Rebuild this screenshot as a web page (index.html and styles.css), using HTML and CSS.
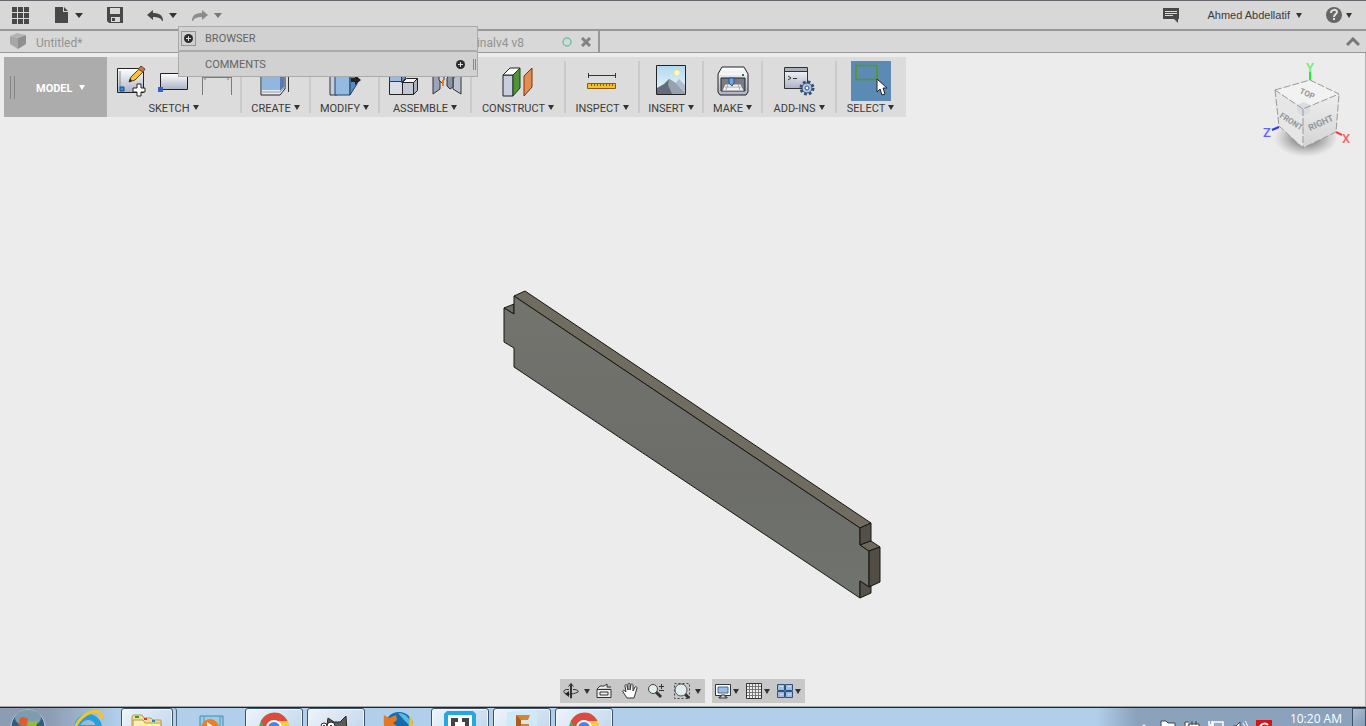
FILE: index.html
```html
<!DOCTYPE html>
<html lang="en">
<head>
  <meta charset="UTF-8">
  <meta name="viewport" content="width=device-width, initial-scale=1.0">
  <title>Untitled*</title>
  <link rel="stylesheet" href="styles.css">
</head>
<body>
  <header class="topbar">
    <div class="tools">
      <button class="tool" aria-label="Data panel">
        <svg width="17" height="18" fill="#484848"><path d="M0 1h5v5H0zM6 1h5v5H6zM12 1h5v5h-5zM0 7h5v5H0zM6 7h5v5H6zM12 7h5v5h-5zM0 13h5v5H0zM6 13h5v5H6zM12 13h5v5h-5z"/></svg>
      </button>
      <button class="tool" aria-label="File">
        <svg width="16" height="16" fill="#484848"><path d="M2 0h8v5h5v11H2z"/><path d="M11 0l4 4h-4z"/></svg>
        <span class="caret"></span>
      </button>
      <button class="tool" aria-label="Save">
        <svg width="16" height="16"><path d="M0 0h16v16H2l-2-2z" fill="#484848"/><path d="M3 1h10v6H3z" fill="#d8d8d8"/><path d="M4 10h9v5H4z" fill="#d8d8d8"/><path d="M5 11h3v3H5z" fill="#484848"/></svg>
      </button>
      <div class="history">
        <button class="tool" aria-label="Undo">
          <svg width="16" height="14"><path d="M6 2v3c6 0 10 2 10 8h-1c-1-3-4-4-9-4v3L0 7z" fill="#484848"/></svg>
          <span class="caret"></span>
        </button>
        <button class="tool muted" aria-label="Redo">
          <svg width="16" height="14"><path d="M10 2v3C4 5 0 7 0 13h1c1-3 4-4 9-4v3l6-5z" fill="#8c8c8c"/></svg>
          <span class="caret"></span>
        </button>
      </div>
    </div>
    <div class="account">
      <button class="tool" aria-label="Comments">
        <svg width="16" height="16"><path d="M0 1h16v11h-1v4l-4-4H0z" fill="#484848"/><path d="M2 4.500h12M2 6.500h12M2 8.500h8" stroke="#d8d8d8"/></svg>
      </button>
      <button class="tool user">Ahmed Abdellatif <span class="caret"></span></button>
      <button class="tool help" aria-label="Help">
        <svg width="16" height="16"><circle cx="8" cy="8" r="8" fill="#666"/><path d="M5 6c0-4 6-4 6-1 0 2-3 2-3 5M8 11v2" fill="none" stroke="#e2e2e2" stroke-width="2"/></svg>
        <span class="caret"></span>
      </button>
    </div>
  </header>

  <nav class="tabs">
    <a class="tab" href="#untitled">
      <svg width="18" height="17"><path d="M1 3l7-3 9 2-8 3z" fill="#b4b4b4"/><path d="M1 3l8 2v11l-8-5z" fill="#a6a6a6"/><path d="M9 5l8-3v9l-8 5z" fill="#8f8f8f"/></svg>
      <span class="tab-title">Untitled*</span>
    </a>
    <a class="tab tab-second" href="#final">
      <span class="tab-title tab-name">Finalv4 v8</span>
      <svg width="10" height="10"><circle cx="5" cy="5" r="4" fill="none" stroke="#6cc3ab" stroke-width="1.5"/></svg>
      <svg width="10" height="10"><path d="M1 1l8 8M9 1l-8 8" stroke="#828282" stroke-width="3"/></svg>
    </a>
    <button class="collapse" aria-label="Collapse toolbar">
      <svg width="14" height="10"><path d="M1 8l6-6 6 6" fill="none" stroke="#777" stroke-width="3"/></svg>
    </button>
  </nav>

  <aside class="panels">
    <div class="panel">
      <button class="panel-add boxed" aria-label="Open browser">
        <svg width="9" height="9"><circle cx="4.500" cy="4.500" r="4.500" fill="#2c2c2c"/><path d="M2 4.500h5M4.500 2v5" stroke="#ddd"/></svg>
      </button>
      <span>BROWSER</span>
    </div>
    <div class="panel">
      <span class="panel-name">COMMENTS</span>
      <button class="panel-add" aria-label="Open comments">
        <svg width="9" height="9"><circle cx="4.500" cy="4.500" r="4.500" fill="#2c2c2c"/><path d="M2 4.500h5M4.500 2v5" stroke="#ddd"/></svg>
      </button>
      <span class="panel-grip"></span>
    </div>
  </aside>

  <main class="viewport">
    <div class="ribbon">
      <div class="workspace">
        <span class="grip"></span>
        <button class="workspace-name">MODEL <span class="caret"></span></button>
      </div>

      <div class="group sketch">
        <div class="icons">
          <svg width="32" height="32">
            <defs><linearGradient id="steel" x2="0" y2="1"><stop offset="0" stop-color="#fff"/><stop offset="1" stop-color="#aab2c6"/></linearGradient></defs>
            <path d="M2.500 3.500h26v24h-26z" fill="url(#steel)" stroke="#222"/>
            <path d="M5 6v17" stroke="#888"/><path d="M5 22h4v4H5z" fill="#3c8ae6" stroke="#124a95"/>
            <path d="M14 17l2-5 9-9 4 3-9 9z" fill="#f6c52f" stroke="#5d4313"/><path d="M23 4l3-3 4 3-2 3z" fill="#bd7954" stroke="#74442e"/><path d="M14 17l1-4 2 3z" fill="#222"/>
            <path d="M22 19h4v4h4v4h-4v4h-4v-4h-4v-4h4z" fill="#fff" stroke="#222"/>
          </svg>
          <svg width="32" height="32">
            <path d="M2.500 8.500h27v16h-27z" fill="url(#steel)" stroke="#222"/><path d="M0 22h5v5H0z" fill="#3264c8"/>
          </svg>
          <svg width="32" height="32" fill="none" stroke="#7b7b7b"><path d="M1.500 30V11.500h29V30M1 12.500h29M4 11v4M27 11v4"/></svg>
        </div>
        <button class="label">SKETCH <span class="caret"></span></button>
      </div>

      <div class="group create">
        <div class="icons">
          <svg width="32" height="32">
            <path d="M1 6h20l4-3v21l-5 6H1z" fill="#e9ebf0" stroke="#222"/><path d="M2 5h18v20H2z" fill="#91b6df"/><path d="M20 5l4-3v20l-4 4z" fill="#587bb4"/><path d="M1 27h19l5-5" fill="none" stroke="#99a"/><path d="M28.500 10v17" stroke="#333"/>
          </svg>
        </div>
        <button class="label">CREATE <span class="caret"></span></button>
      </div>

      <div class="group modify">
        <div class="icons">
          <svg width="32" height="32">
            <path d="M1 5h7v25H1z" fill="#c6ccda" stroke="#333"/><path d="M6 5h15v25H6z" fill="#94b9e2" stroke="#23426e"/><path d="M21 5l7 2v12l-7 11z" fill="#5e88bd" stroke="#23426e"/><path d="M22 13h4v-3l6 5-6 5v-3h-4z" fill="#222"/>
          </svg>
        </div>
        <button class="label">MODIFY <span class="caret"></span></button>
      </div>

      <div class="group assemble">
        <div class="icons">
          <svg width="32" height="32">
            <path d="M1.500 16.500h13v13h-13z" fill="#dadde4" stroke="#222"/><path d="M14.500 17.500h11v12h-11z" fill="#c3c8d5" stroke="#222"/><path d="M14.500 17.500l4-4h11l-4 4z" fill="#f3f4f7" stroke="#222"/><path d="M25.500 17.500l4-4v12l-4 4z" fill="#a9b0bf" stroke="#222"/><path d="M1.500 8.500h12v8h-12z" fill="#96bce6" stroke="#173d78"/><path d="M13.500 8.500l4-4v9l-4 4z" fill="#6488bb" stroke="#173d78"/>
          </svg>
          <svg width="32" height="32">
            <path d="M2 8l7 5v11l-7 5z" fill="#9ca5b6" stroke="#333"/><path d="M30 8l-8 5v11l8 5z" fill="#b9c1ce" stroke="#333"/><path d="M8 8h5v7l-2 3-3-3z" fill="#d4d8e0" stroke="#333"/><path d="M16 13l3-3 3 3v9l-3 2-3-3z" fill="#8b94a5" stroke="#333"/><path d="M12 15v6M19 8v5M17 11.500h5" stroke="#f37a16" stroke-width="2"/>
          </svg>
        </div>
        <button class="label">ASSEMBLE <span class="caret"></span></button>
      </div>

      <div class="group construct">
        <div class="icons">
          <svg width="32" height="32">
            <path d="M1 10h10v21H1z" fill="#c8cedb" stroke="#222"/><path d="M1 10l7-7h10l-7 7z" fill="#fff" stroke="#222"/><path d="M11 10l7-7v20l-7 8z" fill="#50933b" stroke="#173e12"/><path d="M22 11l8-8v19l-8 9z" fill="#e58c52" stroke="#7b3212"/>
          </svg>
        </div>
        <button class="label">CONSTRUCT <span class="caret"></span></button>
      </div>

      <div class="group inspect">
        <div class="icons">
          <svg width="32" height="32">
            <path d="M2 10.500h28M2.500 8v5M29.500 8v5" stroke="#333"/><path d="M1.500 18.500h28v5h-28z" fill="#efc12d" stroke="#90580b"/><path d="M5.500 19v2M8.500 19v2M11.500 19v2M14.500 19v2M17.500 19v2M20.500 19v2M23.500 19v2M26.500 19v2" stroke="#90580b"/>
          </svg>
        </div>
        <button class="label">INSPECT <span class="caret"></span></button>
      </div>

      <div class="group insert">
        <div class="icons">
          <svg width="32" height="32">
            <defs><linearGradient id="sky" x2="0" y2="1"><stop offset="0" stop-color="#afd9ef"/><stop offset="1" stop-color="#edf8fb"/></linearGradient></defs>
            <path d="M1.500 .5h29v29h-29z" fill="url(#sky)"/><circle cx="22" cy="8" r="3" fill="#fffbd1" stroke="#f4df86"/><path d="M17 22l7-8 6 6v9H17z" fill="#aebccb"/><path d="M2 23l7-4 5-5 5 3 11 12H2z" fill="#626c7c"/><path d="M14 14l5 3 11 12H17l-4-9z" fill="#98a2ad"/><path d="M1.500 .5h29v29h-29z" fill="none" stroke="#222"/>
          </svg>
        </div>
        <button class="label">INSERT <span class="caret"></span></button>
      </div>

      <div class="group make">
        <div class="icons">
          <svg width="32" height="32">
            <path d="M5 2h22l4 7v18l-2 3H3l-2-3V9z" fill="url(#steel)" stroke="#222"/><path d="M2 9h28" stroke="#fff"/><path d="M4 13h24v13H4z" fill="#777c88" stroke="#222"/><path d="M8 19h16l3 7H5z" fill="#f3f3f3" stroke="#777"/><path d="M8 22h17M11 19l-2 6M21 19l2 6" stroke="#aaa"/><path d="M12 13h5v5l-2 3-3-3z" fill="#70a5e0" stroke="#24548e"/><path d="M25 9h2v2h-2z" fill="#16861f"/>
          </svg>
        </div>
        <button class="label">MAKE <span class="caret"></span></button>
      </div>

      <div class="group addins">
        <div class="icons">
          <svg width="32" height="32">
            <path d="M1.500 2.500h23v21h-23z" fill="url(#steel)" stroke="#333"/><path d="M2 3h22v3H2z" fill="#a9afbc"/><path d="M1 6.500h24M5 11l3 2-3 2M10 13.500h4" fill="none" stroke="#333"/>
            <circle cx="24" cy="23" r="6" fill="none" stroke="#334e75" stroke-width="3" stroke-dasharray="2.600 2.110"/><circle cx="24" cy="23" r="5" fill="#afcaea" stroke="#334e75"/><circle cx="24" cy="23" r="2" fill="#fff" stroke="#334e75"/>
          </svg>
        </div>
        <button class="label">ADD-INS <span class="caret"></span></button>
      </div>

      <div class="group select">
        <div class="icons">
          <button class="select-icon" aria-label="Select">
            <svg width="40" height="40">
              <path d="M5 4.500h21v14H5z" fill="none" stroke="#579b0c" stroke-width="1.500"/><path d="M26 18v13l3-3 2 6 3-1-2-6h4z" fill="#fff" stroke="#222"/>
            </svg>
          </button>
        </div>
        <button class="label">SELECT <span class="caret"></span></button>
      </div>
    </div>

    <svg class="cube" width="110" height="110">
      <defs>
        <radialGradient id="shade"><stop offset="0.400" stop-color="#777" stop-opacity="0.700"/><stop offset="1" stop-color="#999" stop-opacity="0"/></radialGradient>
        <linearGradient id="right" x2="0" y2="1"><stop offset="0" stop-color="#eee"/><stop offset="1" stop-color="#d4d4d4"/></linearGradient>
      </defs>
      <ellipse cx="56" cy="83" rx="32" ry="19" fill="url(#shade)"/>
      <path d="M60 17v8" stroke="#2bea2b" stroke-width="2"/>
      <path d="M22 75l7-3" stroke="#3333ee" stroke-width="2"/>
      <path d="M86 77l6 3" stroke="#ee4444" stroke-width="2"/>
      <path d="M25 35l35-10 29 14-36 15z" fill="#f2f2f2"/>
      <path d="M25 35l28 19v39L29 71z" fill="#e6e6e6"/>
      <path d="M53 54l36-15-3 38-33 16z" fill="url(#right)"/>
      <path d="M47 50l7-3 6 3v8l-7 3-6-4z" fill="#d9dde3"/>
      <path d="M25 35l35-10 29 14-36 15zL29 71l24 22 33-16 3-38M53 54v39" fill="none" stroke="#999" stroke-dasharray="7 2"/>
      <g class="cube-face">
        <text transform="translate(49 38) rotate(24)">TOP</text>
        <text transform="translate(29 62) rotate(32)">FRONT</text>
        <text class="cube-right" transform="translate(60 76) rotate(-24)">RIGHT</text>
      </g>
      <g class="cube-axis">
        <text x="60" y="17" fill="#6aee6a">Y</text>
        <text x="17" y="82" fill="#6565f4">Z</text>
        <text x="96" y="88" fill="#f46565">X</text>
      </g>
    </svg>

    <svg class="part" width="384" height="314" stroke="#171712" stroke-linejoin="round">
      <defs>
        <linearGradient id="front" x2="0" y2="1"><stop offset="0" stop-color="#73746e"/><stop offset="0.600" stop-color="#6c6d68"/><stop offset="1" stop-color="#70736e"/></linearGradient>
      </defs>
      <path d="M14 8l11-5 346 232-11 5z" fill="#716c60"/>
      <path d="M4 20l10-4v10z" fill="#6e6a60"/>
      <path d="M14 8l346 232v17l9 6v36l-9-6v17L14 79V60l-10-6V20l10 6z" fill="url(#front)"/>
      <path d="M360 240l11-5v18l-11 4z" fill="#545047"/>
      <path d="M360 257l11-4 9 6-11 4z" fill="#6f695d"/>
      <path d="M369 263l11-4v35l-11 5z" fill="#514d45"/>
      <path d="M360 293l9 6 2-1v7l-11 5z" fill="#56524a"/>
    </svg>

    <div class="navbar">
      <div class="nav-group">
        <button class="nav-button orbit" aria-label="Orbit">
          <svg width="16" height="16" fill="none" stroke="#333"><path d="M7.500 1h1v14h-1z" fill="#fff"/><path d="M5.500 3.500l2.500-3 2.500 3M6 6.500C2 6 0 8 1 9.500c2 2 8 2.500 14-.5M10 6.500c4 0 6 1 5 2.500"/><path d="M6 8v6l-4-3z" fill="#222" stroke="none"/></svg>
          <span class="caret"></span>
        </button>
        <button class="nav-button" aria-label="Look at">
          <svg width="16" height="16" fill="#eee" stroke="#333"><path d="M1 6.500h14v8H1zM4 9h8v3H4zM1 6l3-3h4l3-2v3h4" /></svg>
        </button>
        <button class="nav-button" aria-label="Pan">
          <svg width="16" height="16"><path d="M5 15L1 9c-1-2 1-2 2-1l1 1-1-6c0-2 2-2 2 0l1 4V1c0-1 2-1 2 0v6l1-5c0-2 2-1 2 0v6l2-4c1-1 2 0 2 1l-3 10z" fill="#fff" stroke="#333"/></svg>
        </button>
        <button class="nav-button" aria-label="Zoom">
          <svg width="16" height="16"><path d="M8 9l5 5" stroke="#333" stroke-width="3"/><circle cx="5" cy="6" r="4.500" fill="#e4eeee" stroke="#444"/><path d="M11 3.500h5M13.500 1v5M11 7.500h5" stroke="#333"/></svg>
        </button>
        <button class="nav-button orbit" aria-label="Zoom window">
          <svg width="16" height="16"><path d="M.5 .5h15v15H.5z" fill="none" stroke="#444" stroke-dasharray="2 2"/><path d="M11 11l4 4" stroke="#333" stroke-width="3"/><circle cx="7" cy="7" r="6" fill="#e1edec" stroke="#555"/></svg>
          <span class="caret"></span>
        </button>
      </div>
      <div class="nav-group display">
        <button class="nav-button" aria-label="Display settings">
          <svg width="16" height="16"><path d="M.5 1.500h15v11H.5z" fill="#fff" stroke="#333"/><path d="M3 4h10v6H3z" fill="#9bbce4" stroke="#456d9d"/><path d="M6 12h4v2h2v1H4v-1h2z" fill="#ddd" stroke="#333"/></svg>
          <span class="caret"></span>
        </button>
        <button class="nav-button" aria-label="Grid settings">
          <svg width="16" height="16"><path d="M.5 .5h15v15H.5z" fill="#eee" stroke="#333"/><path d="M3.500 1v14M6.500 1v14M9.500 1v14M12.500 1v14M1 3.500h14M1 6.500h14M1 9.500h14M1 12.500h14" stroke="#777"/></svg>
          <span class="caret"></span>
        </button>
        <button class="nav-button" aria-label="Viewports">
          <svg width="16" height="16" fill="#9fbce2" stroke="#31537f"><path d="M.5 1.500h7v6h-7zM8.500 1.500h7v6h-7zM.5 8.500h7v6h-7zM8.500 8.500h7v6h-7z"/><path d="M3 3.500h3M11 3.500h3M3 11.500h3M11 11.500h3" stroke="#d5e3f4"/></svg>
          <span class="caret"></span>
        </button>
      </div>
    </div>
  </main>

  <footer class="taskbar">
    <button class="task start" aria-label="Start">
      <svg width="38" height="36"><circle cx="19" cy="19" r="17" fill="#315c7c" stroke="#c3d2df"/><ellipse cx="19" cy="10" rx="13" ry="8" fill="#7d9caf"/><path d="M11 10c3-2 5-1 8 1l-2 7c-3-2-5-2-8-1z" fill="#e25b2b"/><path d="M20 12c3 2 5 2 9 0l-2 7c-3 2-6 1-9-1z" fill="#91bd3d"/><path d="M9 18c3-1 5-1 8 1l-2 7H7z" fill="#4b9ddd"/><path d="M18 20c3 2 5 2 8 1l-2 8h-8z" fill="#f5c638"/></svg>
    </button>
    <button class="task" aria-label="Internet Explorer">
      <svg width="32" height="36"><circle cx="16" cy="20" r="11" fill="none" stroke="#269fdd" stroke-width="6"/><path d="M8 19h18" stroke="#269fdd" stroke-width="4"/><path d="M2 25C4 8 25-2 29 6c1 2 0 4-1 5" fill="none" stroke="#f2c52d" stroke-width="3"/></svg>
    </button>
    <button class="task open stacked" aria-label="Explorer">
      <svg width="32" height="36" stroke="#b69b4d"><path d="M1 8l1-2h9l2 3h7l2 2h8v23H1z" fill="#f2df94"/><path d="M2 11h10l2 3h16v20H2z" fill="#fbefb8"/><path d="M4 8h4" stroke="#2e9b3c" stroke-width="2"/><path d="M13 10h3" stroke="#d33b20" stroke-width="2"/><path d="M21 12h3" stroke="#2686d8" stroke-width="2"/></svg>
    </button>
    <button class="task" aria-label="Media Player">
      <svg width="32" height="36"><path d="M4 8h23v26H4z" fill="#9ecbe6" stroke="#418bad"/><path d="M8 8v24M24 8v24" stroke="#4f9bbc"/><circle cx="14" cy="20" r="9" fill="#f07d20"/><path d="M11 14l10 7-10 7z" fill="#fff"/></svg>
    </button>
    <button class="task open" aria-label="Chrome">
      <svg width="32" height="36"><circle cx="16" cy="19" r="15" fill="#4aaa57"/><path d="M3 12C10 0 25 1 30 13H16l-7 10z" fill="#dd4b3e"/><path d="M16 12h14c4 12-4 22-15 22l8-14z" fill="#f7cd3b"/><circle cx="16" cy="19" r="7" fill="#4584e8" stroke="#fff" stroke-width="2"/></svg>
    </button>
    <button class="task open" aria-label="GIMP">
      <svg width="32" height="36"><path d="M7 16l1-7 6 4h6l6-6 1 16-5 12H6z" fill="#5e5b54" stroke="#292825"/><circle cx="4" cy="17" r="3" fill="#fff" stroke="#222"/><circle cx="11" cy="17" r="4" fill="#fff" stroke="#222"/><circle cx="4" cy="17" r="1"/><circle cx="11" cy="17" r="1"/></svg>
    </button>
    <button class="task" aria-label="Firefox">
      <svg width="32" height="36"><circle cx="17" cy="18" r="14" fill="#166bae"/><path d="M16 5c8 0 13 6 12 13l-6-6z" fill="#58b9df"/><path d="M2 7l5 3 7-3 1 5-4 3 5 4-5 4 8 7C9 33 0 27 2 7z" fill="#e57823"/><path d="M27 7c6 7 5 16-1 22l-4-3c5-5 6-11 5-19z" fill="#f5bd31"/></svg>
    </button>
    <button class="task open" aria-label="Brackets">
      <svg width="32" height="36"><path d="M3 2h26l3 3v29H0V5z" fill="#25a8df"/><path d="M4 6h24v27H4z" fill="#fff"/><path d="M14 11H9v18h5M18 11h5v18h-5" fill="none" stroke="#444" stroke-width="4"/></svg>
    </button>
    <button class="task open" aria-label="Fusion 360">
      <svg width="32" height="36"><path d="M1 3h30v30H1z" fill="#cfe9f7"/><path d="M10 6h14l-2 5h-7v4h8v5h-8v13h-5z" fill="#d98332"/><path d="M10 6l5 5v22h-5z" fill="#ad5d1d"/></svg>
    </button>
    <button class="task open" aria-label="Chrome">
      <svg width="32" height="36"><circle cx="16" cy="19" r="15" fill="#4aaa57"/><path d="M3 12C10 0 25 1 30 13H16l-7 10z" fill="#dd4b3e"/><path d="M16 12h14c4 12-4 22-15 22l8-14z" fill="#f7cd3b"/><circle cx="16" cy="19" r="7" fill="#4584e8" stroke="#fff" stroke-width="2"/></svg>
    </button>
    <div class="tray">
      <svg width="16" height="24"><path d="M4 20l4-4 4 4z" fill="#eee"/></svg>
      <svg width="16" height="24"><path d="M1 13h5l2 2h7v7H4v2H1z" fill="#fff" stroke="#444"/></svg>
      <svg width="16" height="24"><path d="M8 13v4M12 13v4M5 16h10v4l-4 3H5zM5 14H1v9" fill="#fff" stroke="#444"/></svg>
      <svg width="16" height="24"><path d="M5 14h10v9H5zM1 13v4h3v-4M3 17v7" fill="#9cabb9" stroke="#fff" stroke-width="1.500"/></svg>
      <svg width="16" height="24"><path d="M1 18h3l4-4v10H1z" fill="#fff" stroke="#444"/><path d="M11 15c2 2 2 6 0 9M13 13c3 3 3 8 1 11" fill="none" stroke="#fff"/></svg>
      <svg width="16" height="24"><path d="M0 12h16v12H0z" fill="#d81218"/><path d="M12 17c-3-3-8-1-8 3h8" fill="none" stroke="#fff" stroke-width="2"/></svg>
      <time class="clock">10:20 AM</time>
    </div>
    <button class="show-desktop" aria-label="Show desktop"></button>
  </footer>
</body>
</html>
```
FILE: styles.css
```css
* {
  box-sizing: border-box;
}
body {
  margin: 0;
  height: 100vh;
  display: flex;
  flex-direction: column;
  position: relative;
  overflow: hidden;
  font-family: Roboto, Arial, sans-serif;
  font-size: 11px;
  color: #3b3b3b;
  background-color: #ececec;
}
button {
  padding: 0;
  border: none;
  background: none;
  font: inherit;
  color: inherit;
  cursor: pointer;
}
svg {
  display: block;
  flex-shrink: 0;
}
.caret {
  width: 0;
  height: 0;
  border-left: 3px solid transparent;
  border-right: 3px solid transparent;
  border-top: 5px solid #333;
}

/* top bar */
.topbar {
  flex: 0 0 31px;
  display: flex;
  justify-content: space-between;
  align-items: center;
  padding: 0 14px 0 12px;
  border-top: 1px solid #66666c;
  border-bottom: 2px solid #989898;
  background-color: #d8d8d8;
}
.tools {
  display: flex;
  align-items: center;
  gap: 24px;
}
.history {
  display: flex;
  gap: 15px;
}
.tool {
  display: flex;
  align-items: center;
  gap: 6px;
}
.tools .caret {
  border-left-width: 4px;
  border-right-width: 4px;
}
.muted .caret {
  border-top-color: #777;
}
.account {
  display: flex;
  align-items: center;
  gap: 28px;
}
.user {
  font-family: "Liberation Sans", Arial, sans-serif;
}
.help {
  gap: 4px;
}
.account .help {
  margin-left: -4px;
}

/* document tabs */
.tabs {
  flex: 0 0 22px;
  display: flex;
  border-bottom: 1px solid #989898;
  background-color: #d8d8d8;
}
.tab {
  display: flex;
  align-items: center;
  gap: 9px;
  width: 300px;
  padding-left: 9px;
  font-size: 12px;
  color: #929292;
  text-decoration: none;
}
.tab-second {
  padding: 0 7px 0 0;
  border-right: 2px solid #989898;
}
.tab-title {
  padding-top: 3px;
}
.tab-name {
  flex: 1;
  padding-right: 29px;
  text-align: right;
}
.collapse {
  margin-left: auto;
  padding-right: 6px;
}

/* floating panels */
.panels {
  position: absolute;
  left: 178px;
  top: 26px;
  z-index: 2;
  width: 300px;
  border: 1px solid #aaa;
  background-color: #d1d1d1;
  color: #646464;
}
.panel {
  display: flex;
  align-items: center;
  height: 23px;
  padding-left: 2px;
}
.panel + .panel {
  height: 26px;
  border-top: 2px solid #a9a9a9;
}
.panel-add {
  display: flex;
  justify-content: center;
  align-items: center;
  width: 15px;
  height: 15px;
}
.boxed {
  margin-right: 9px;
  border: 1px solid #949494;
}
.panel-name {
  flex: 1;
  padding-left: 24px;
}
.panel-grip {
  width: 3px;
  height: 11px;
  margin: 0 1px 0 5px;
  border-left: 1px solid #888;
  border-right: 1px solid #888;
}

/* ribbon */
.viewport {
  flex: 1;
  position: relative;
  min-height: 0;
  padding: 4px;
  border-right: 1px solid #b0b0b0;
  border-bottom: 1px solid #a5a5a5;
}
.ribbon {
  display: flex;
  width: max-content;
  height: 60px;
  background-color: #dcdcdc;
}
.workspace {
  display: flex;
  align-items: center;
  gap: 21px;
  width: 103px;
  padding-left: 6px;
  background-color: #acacac;
}
.grip {
  width: 5px;
  height: 23px;
  border-left: 1px solid #858585;
  border-right: 1px solid #858585;
}
.workspace-name {
  display: flex;
  align-items: center;
  gap: 6px;
  padding-top: 2px;
  font-weight: bold;
  color: #fff;
}
.workspace-name .caret {
  margin-bottom: 2px;
  border-top-color: #fff;
}
.group {
  display: flex;
  flex-direction: column;
  align-items: center;
  width: 69px;
  margin: 4px 0;
  border-right: 2px solid #cacaca;
}
.icons {
  display: flex;
  flex-shrink: 0;
  align-items: center;
  gap: 11px;
  height: 40px;
}
.label {
  display: flex;
  align-items: center;
  gap: 3px;
  line-height: 15px;
}
.label .caret {
  margin-bottom: 2px;
}
.sketch {
  width: 135px;
}
.assemble {
  width: 92px;
}
.construct {
  width: 94px;
}
.inspect,
.addins {
  width: 74px;
}
.insert {
  width: 64px;
}
.make {
  width: 59px;
}
.select {
  padding-right: 2px;
  border-right: none;
}
.select-icon {
  background-color: #5b8ab5;
}

/* model and view cube */
.part {
  position: absolute;
  left: calc(50% - 183px);
  top: 235px;
}
.cube {
  position: absolute;
  right: 5px;
  top: 2px;
}
.cube-face {
  font-size: 8px;
  font-weight: bold;
  fill: #92969b;
}
.cube-right {
  font-size: 9px;
}
.cube-axis {
  font-size: 13px;
  font-weight: 500;
  text-anchor: middle;
}

/* navigation bar */
.navbar {
  position: absolute;
  left: 0;
  right: 0;
  bottom: 3px;
  display: flex;
  justify-content: center;
  gap: 7px;
}
.nav-group {
  display: flex;
  align-items: center;
  gap: 10px;
  height: 24px;
  padding: 0 4px 0 3px;
  background-color: #c8c8c8;
}
.nav-button {
  display: flex;
  align-items: center;
  gap: 2px;
}
.orbit {
  gap: 5px;
}
.orbit:first-child {
  margin-right: -4px;
}
.display {
  gap: 7px;
}

/* taskbar */
.taskbar {
  flex: 0 0 19px;
  display: flex;
  align-items: flex-start;
  gap: 4px;
  overflow: hidden;
  border-top: 1px solid #1f2830;
  background: linear-gradient(to right, #8c9db3 0, #8c9db3 50px, #b1cfeb 120px, #b1cfeb calc(100% - 270px), #8aa2bc calc(100% - 230px), #8aa2bc 100%);
}
.task {
  display: flex;
  justify-content: center;
  width: 58px;
  height: 40px;
  border-radius: 3px;
}
.start {
  width: 55px;
}
.open {
  border: 1px solid #3c5268;
  background: linear-gradient(135deg, #eef4fa, #b9d1e9);
  box-shadow: inset 0 0 0 1px #f3f8fc;
}
.stacked {
  width: 52px;
  margin-right: 6px;
  box-shadow: inset 0 0 0 1px #f3f8fc, 3px 0 0 #b9cfe3, 4px 0 0 #4e6780;
}
.tray {
  display: flex;
  gap: 8px;
  margin-left: auto;
}
.clock {
  padding: 3px 6px 0 10px;
  font-family: "Open Sans", "Noto Sans", sans-serif;
  font-size: 12px;
  line-height: 15px;
  color: #fff;
}
.show-desktop {
  width: 14px;
  height: 40px;
  border: 1px solid #3f536b;
  background: linear-gradient(135deg, #aabccf, #6f86a1);
}
```
